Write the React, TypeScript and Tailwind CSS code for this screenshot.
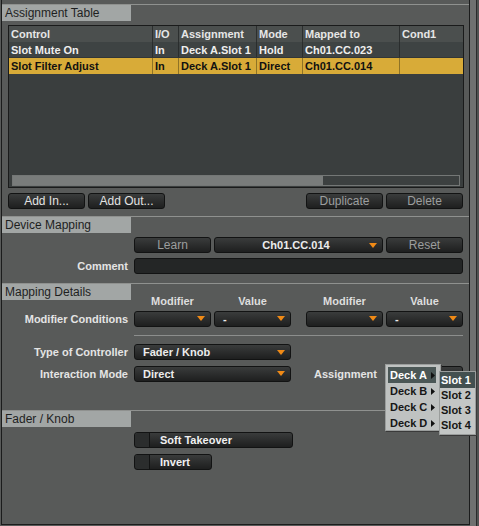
const btn =
  'h-[16px] rounded-[3px] border border-[#121313] bg-gradient-to-b from-[#3a3c3c] to-[#1e1f1f] flex items-center'

const Button = ({ label, w, dim }: { label: string; w: string; dim?: boolean }) => (
  <div className={`${btn} ${w} justify-center text-[12px] ${dim ? 'text-[#9c9e9e]' : 'text-[#e2e2e2]'}`}>
    {label}
  </div>
)

const Arrow = () => (
  <svg width="8" height="5" viewBox="0 0 8 5" className="shrink-0">
    <path d="M0 0H8L4 5Z" fill="#f08a16" />
  </svg>
)

const Dropdown = ({ label, w, center }: { label?: string; w: string; center?: boolean }) => (
  <div className={`${btn} ${w} pl-[8px] pr-[5px] text-[11px] font-bold text-[#ececec]`}>
    <span className={`flex-1 ${center ? 'text-center' : ''}`}>{label}</span>
    <Arrow />
  </div>
)

const Section = ({ title }: { title: string }) => (
  <div className="border-t border-[#8f918f]">
    <div className="w-[129px] h-[16px] bg-[#a2a6a5] text-[#1e1f1f] text-[12px] leading-[16px] pl-[3px]">{title}</div>
  </div>
)

const Label = ({ text }: { text: string }) => (
  <div className="w-[132px] pr-[6px] text-right text-[11px] font-bold text-[#e4e4e4]">{text}</div>
)

const Toggle = ({ label, w }: { label: string; w: string }) => (
  <div className={`${btn} ${w} text-[11px] font-bold text-[#f0f0f0]`}>
    <div className="w-[15px] h-full border-r border-[#121313] bg-[#2b2d2d] rounded-l-[3px]" />
    <span className="pl-[10px]">{label}</span>
  </div>
)

const cols = 'grid grid-cols-[144px_26px_78px_46px_97px_63px]'

const rows = [
  ['Slot Mute On', 'In', 'Deck A.Slot 1', 'Hold', 'Ch01.CC.023', ''],
  ['Slot Filter Adjust', 'In', 'Deck A.Slot 1', 'Direct', 'Ch01.CC.014', ''],
]

const MenuArrow = () => (
  <svg width="4" height="7" viewBox="0 0 4 7">
    <path d="M0 0L4 3.5L0 7Z" fill="#111" />
  </svg>
)

export default function App() {
  const head = ['Control', 'I/O', 'Assignment', 'Mode', 'Mapped to', 'Cond1']

  return (
    <div className="relative w-[479px] h-[526px] flex bg-[#585a59] [font-family:'Liberation_Sans',Arial,sans-serif] select-none">
      <div className="w-[1px]" />
      <div className="w-[469px] h-[525px] border-l border-r border-b border-[#1b1c1c] flex flex-col pt-[4px]">
        <Section title="Assignment Table" />

        <div className="ml-[6px] mt-[4px] w-[456px] h-[163px] border border-[#1a1b1b] flex flex-col bg-[#3a3e3e] text-[11px] font-bold">
          <div className={`${cols} h-[16px] bg-[#4b4f4e] text-[#e6e6e6] leading-[16px]`}>
            {head.map((h, i) => (
              <div key={h} className={`pl-[2px] ${i < 5 ? 'border-r border-[#2c2f2f]' : ''}`}>
                {h}
              </div>
            ))}
          </div>
          {rows.map((r, ri) => (
            <div
              key={ri}
              className={`${cols} h-[16px] leading-[16px] ${
                ri === 1 ? 'bg-[#d8ab38] text-[#111]' : 'bg-[#3e4343] text-[#eeeeee] border-b border-[#323636]'
              }`}
            >
              {r.map((c, i) => (
                <div
                  key={i}
                  className={`pl-[2px] whitespace-nowrap overflow-hidden ${
                    i < 5 ? (ri === 1 ? 'border-r border-[#8f7326]' : 'border-r border-[#2a2d2d]') : ''
                  }`}
                >
                  {c}
                </div>
              ))}
            </div>
          ))}
          <div className="flex-1" />
          <div className="mx-[3px] mb-[1px] h-[11px] border border-[#747776] bg-[#3c4040] flex">
            <div className="w-[310px] h-full bg-[#797c7b]" />
          </div>
        </div>

        <div className="flex mt-[5px] pl-[6px]">
          <div className="flex gap-[3px]">
            <Button label="Add In..." w="w-[77px]" />
            <Button label="Add Out..." w="w-[77px]" />
          </div>
          <div className="flex gap-[3px] ml-[141px]">
            <Button label="Duplicate" w="w-[77px]" dim />
            <Button label="Delete" w="w-[77px]" dim />
          </div>
        </div>

        <div className="mt-[7px]">
          <Section title="Device Mapping" />
        </div>

        <div className="flex items-center mt-[4px]">
          <div className="w-[132px]" />
          <div className="flex gap-[3px]">
            <Button label="Learn" w="w-[77px]" dim />
            <Dropdown label="Ch01.CC.014" w="w-[169px]" center />
            <Button label="Reset" w="w-[77px]" dim />
          </div>
        </div>

        <div className="flex items-center mt-[5px]">
          <Label text="Comment" />
          <div className="w-[329px] h-[16px] rounded-[3px] border border-[#121313] bg-[#242626]" />
        </div>

        <div className="mt-[8px]">
          <Section title="Mapping Details" />
        </div>

        <div className="flex -mt-[6px] h-[16px] items-center text-[11px] font-bold text-[#dedede]">
          <div className="w-[132px]" />
          <div className="w-[77px] text-center">Modifier</div>
          <div className="w-[77px] ml-[3px] text-center">Value</div>
          <div className="w-[77px] ml-[15px] text-center">Modifier</div>
          <div className="w-[77px] ml-[3px] text-center">Value</div>
        </div>

        <div className="flex items-center mt-[1px]">
          <Label text="Modifier Conditions" />
          <div className="flex gap-[3px]">
            <Dropdown w="w-[77px]" />
            <Dropdown label="-" w="w-[77px]" />
          </div>
          <div className="flex gap-[3px] ml-[15px]">
            <Dropdown w="w-[77px]" />
            <Dropdown label="-" w="w-[77px]" />
          </div>
        </div>

        <div className="ml-[132px] mt-[8px] w-[329px] border-t border-[#8c8e8d]" />

        <div className="flex items-center mt-[8px]">
          <Label text="Type of Controller" />
          <Dropdown label="Fader / Knob" w="w-[157px]" />
        </div>

        <div className="flex items-center mt-[5px]">
          <Label text="Interaction Mode" />
          <Dropdown label="Direct" w="w-[157px]" />
          <div className="w-[95px] pr-[9px] text-right text-[11px] font-bold text-[#e4e4e4]">Assignment</div>
          <Dropdown w="w-[77px]" />
        </div>

        <div className="mt-[28px]">
          <Section title="Fader / Knob" />
        </div>

        <div className="flex mt-[5px]">
          <div className="w-[132px]" />
          <Toggle label="Soft Takeover" w="w-[159px]" />
        </div>
        <div className="flex mt-[6px]">
          <div className="w-[132px]" />
          <Toggle label="Invert" w="w-[78px]" />
        </div>
      </div>
      <div className="w-[7px] h-full bg-[#6f7170] border-r border-[#2a2b2b]" />
      <div className="w-[2px] h-full bg-[#505251]" />

      {/* popup menu */}
      <div className="absolute left-[385px] top-[364px] w-[56px] h-[67px] bg-[#bfc2c1] border border-[#9a9d9c] shadow-[1px_1px_0_#3a3a3a] pt-[2px] text-[11px] font-bold">
        {['Deck A', 'Deck B', 'Deck C', 'Deck D'].map((d, i) => (
          <div
            key={d}
            className={`ml-[2px] w-[48px] h-[16px] flex items-center justify-between pl-[2px] pr-[1px] ${
              i === 0 ? 'bg-[#4b5756] text-white' : 'text-[#161616]'
            }`}
          >
            <span>{d}</span>
            <MenuArrow />
          </div>
        ))}
      </div>
      <div className="absolute left-[439px] top-[371px] w-[37px] h-[64px] bg-[#c3c6c5] border border-[#9a9d9c] shadow-[1px_1px_0_#3a3a3a] text-[11px] font-bold">
        {['Slot 1', 'Slot 2', 'Slot 3', 'Slot 4'].map((s, i) => (
          <div
            key={s}
            className={`h-[15px] flex items-center pl-[1px] ${i === 0 ? 'bg-[#435050] text-white h-[16px]' : 'text-[#161616]'}`}
          >
            {s}
          </div>
        ))}
      </div>
    </div>
  )
}
